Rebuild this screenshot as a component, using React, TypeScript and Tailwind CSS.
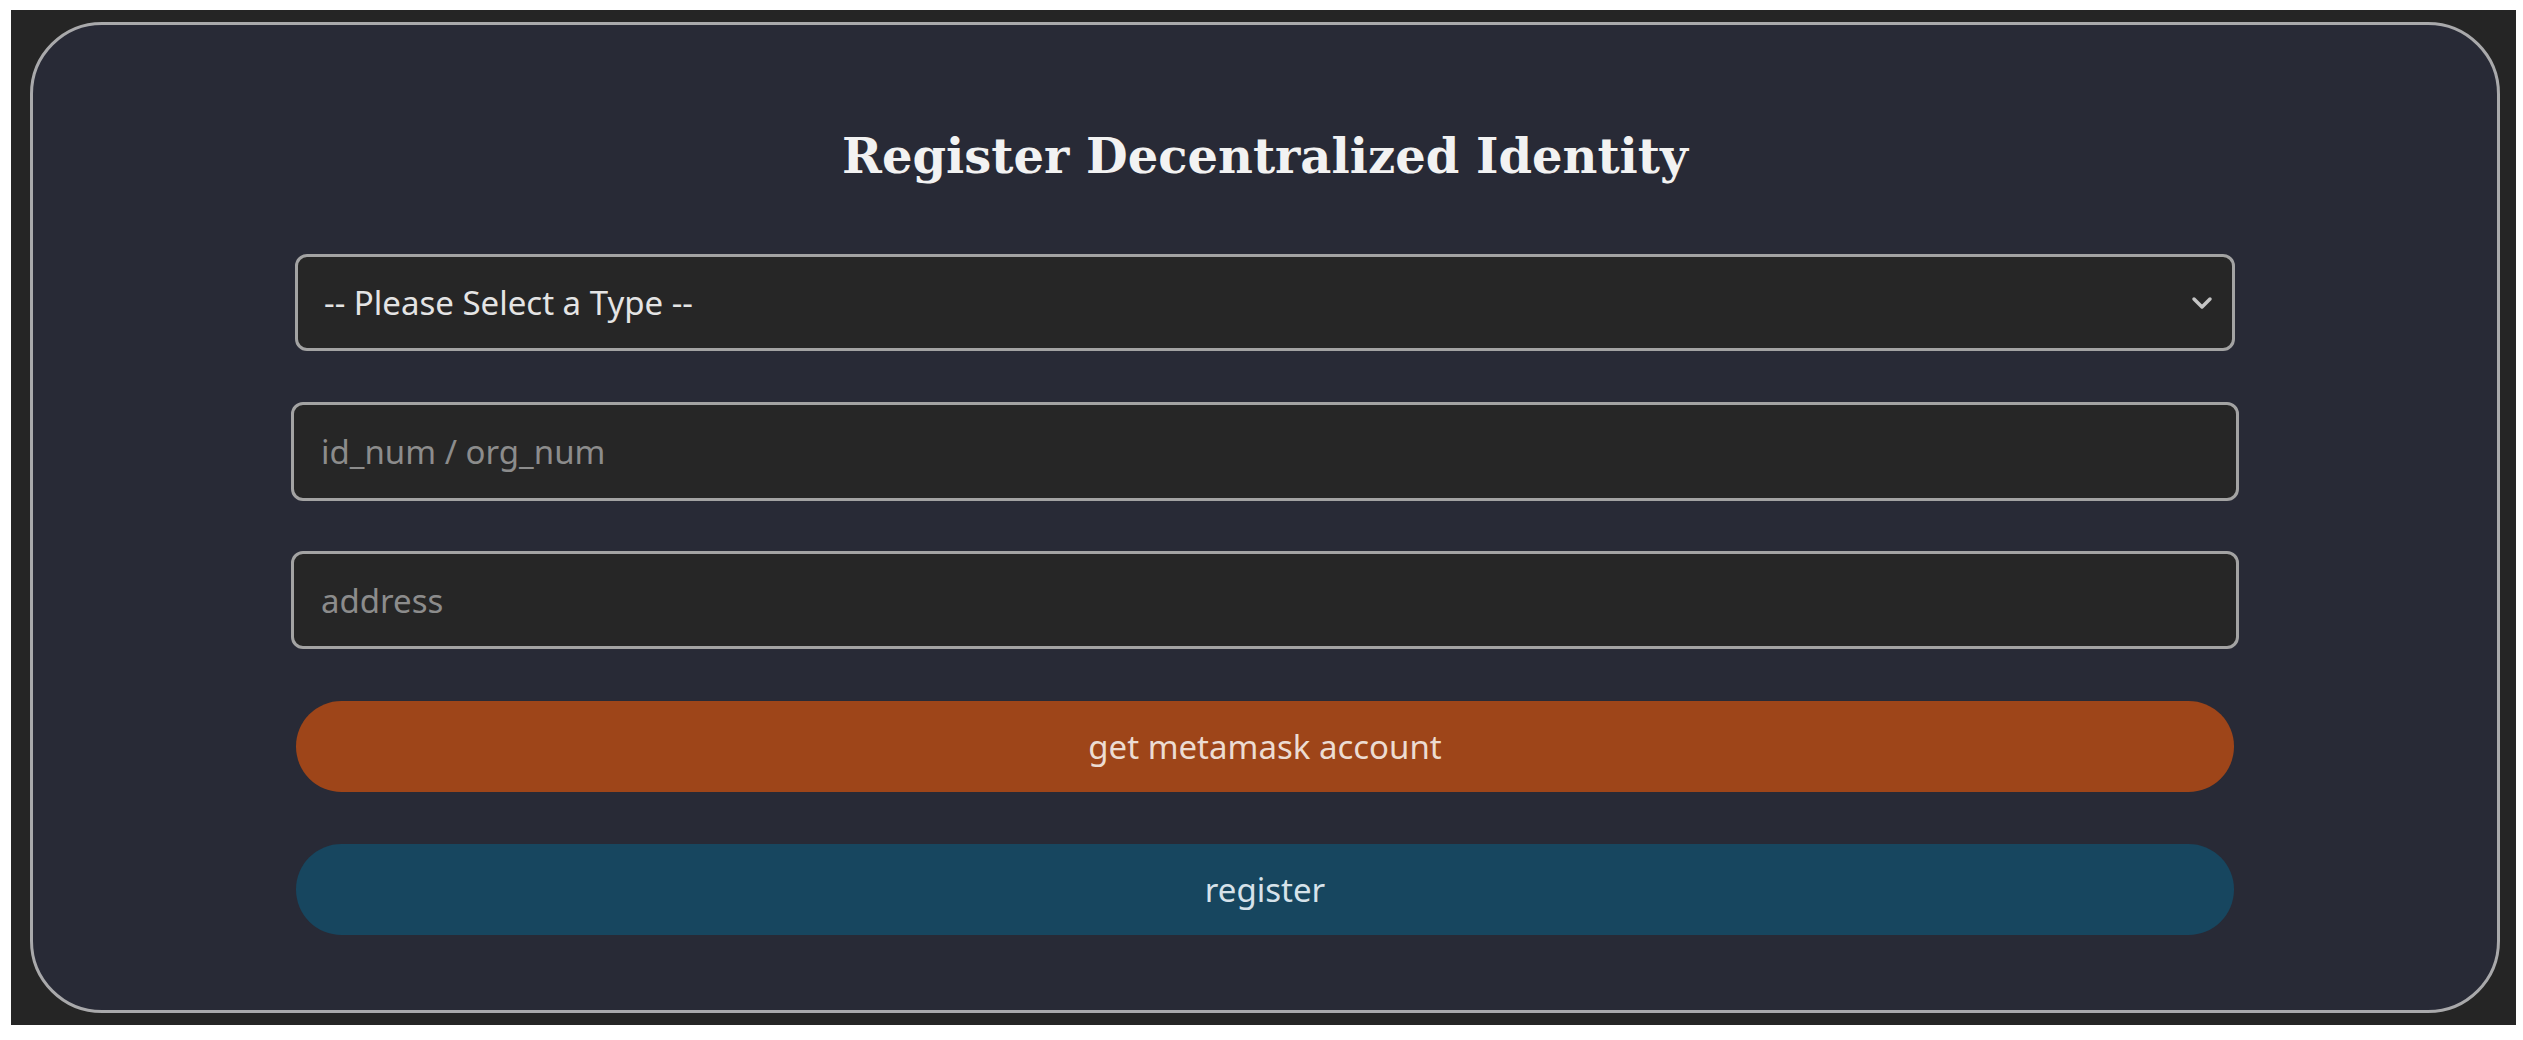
import { useState } from 'react';

const sans = 'font-["Noto_Sans","Open_Sans",sans-serif]';

function Chevron() {
    return (
        <svg width="22" height="14" viewBox="0 0 22 14" className="pointer-events-none absolute right-[22px] top-1/2 -translate-y-1/2">
            <path d="M3 3 L11 11 L19 3" fill="none" stroke="#c4c4c4" strokeWidth="3.5" strokeLinecap="round" strokeLinejoin="round" />
        </svg>
    );
}

export default function App() {
    const [kind, setKind] = useState('');
    const [idNum, setIdNum] = useState('');
    const [address, setAddress] = useState('');

    return (
        <div className="min-h-[1040px] w-[2523px] bg-white pt-[10px] pl-[11px]">
            <div className="h-[1015px] w-[2505px] bg-[#252525] pt-[12px] pr-[16px] pb-[12px] pl-[19px]">
                <div className="flex h-full flex-col items-center rounded-[72px] border-[3px] border-[#a9a9ab] bg-[#282a36]">
                    <h1 className='mt-[107px] font-["DejaVu_Serif",serif] text-[48px] leading-none font-bold text-[#f2f2f2]'>
                        Register Decentralized Identity
                    </h1>

                    <div className="relative mt-[74px] w-[1940px]">
                        <select
                            value={kind}
                            onChange={(e) => setKind(e.target.value)}
                            className={`${sans} h-[97px] w-full appearance-none rounded-[12px] border-[3px] border-[#a3a3a3] bg-[#262626] pl-[26px] text-[33px] text-[#e4e4e4] outline-none`}
                        >
                            <option value="">-- Please Select a Type --</option>
                            <option value="person">person</option>
                            <option value="org">organization</option>
                        </select>
                        <Chevron />
                    </div>

                    <input
                        value={idNum}
                        onChange={(e) => setIdNum(e.target.value)}
                        placeholder="id_num / org_num"
                        className={`${sans} mt-[51px] h-[99px] w-[1948px] rounded-[12px] border-[3px] border-[#a3a3a3] bg-[#262626] pl-[27px] text-[33px] text-[#e4e4e4] outline-none placeholder:text-[#8c8c8c]`}
                    />

                    <input
                        value={address}
                        onChange={(e) => setAddress(e.target.value)}
                        placeholder="address"
                        className={`${sans} mt-[50px] h-[98px] w-[1948px] rounded-[12px] border-[3px] border-[#a3a3a3] bg-[#262626] pl-[27px] text-[33px] text-[#e4e4e4] outline-none placeholder:text-[#8c8c8c]`}
                    />

                    <button className={`${sans} mt-[52px] h-[91px] w-[1938px] rounded-full bg-[#9e4519] text-[33px] text-[#ecdcd2]`}>
                        get metamask account
                    </button>

                    <button className={`${sans} mt-[52px] h-[91px] w-[1938px] rounded-full bg-[#17465f] text-[33px] text-[#d6e2ea]`}>
                        register
                    </button>
                </div>
            </div>
        </div>
    );
}
